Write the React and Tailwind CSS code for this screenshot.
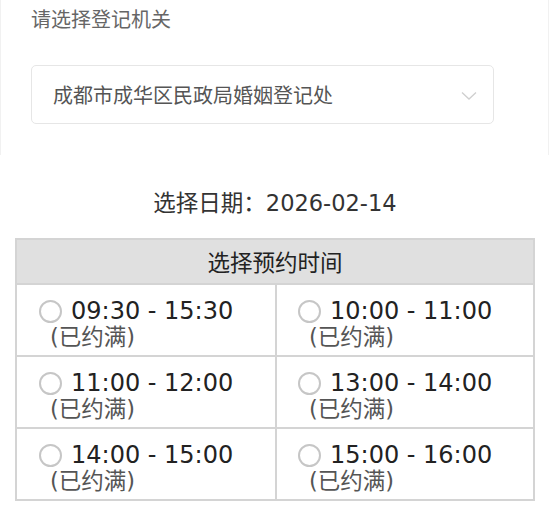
import React from 'react'

const slots = [
  ['09:30 - 15:30', '10:00 - 11:00'],
  ['11:00 - 12:00', '13:00 - 14:00'],
  ['14:00 - 15:00', '15:00 - 16:00'],
]

const SlotCell = ({ time, right }) => {
  return (
    <div className={`h-[70px] pt-[12px] ${right ? 'pl-[21px] border-l-2 border-[#d4d4d4]' : 'pl-[22px]'}`}>
      <div className="flex items-center gap-x-[9px] h-[28px]">
        <span className="w-[23px] h-[23px] rounded-full border-2 border-[#c6c6c6] bg-white shrink-0" />
        <span className="text-[24px] leading-[28px] text-[#222]">{time}</span>
      </div>
      <p className="pl-[11px] text-[22.5px] leading-[24px] text-[#555]">(已约满)</p>
    </div>
  )
}

export default function App() {
  return (
    <div
      className="w-[550px] h-[509px] bg-white overflow-hidden"
      style={{ fontFamily: '"DejaVu Sans", "Noto Sans CJK SC", sans-serif' }}
    >
      {/* Registry office picker */}
      <div
        className="w-[549px] h-[155px] border-x border-[#f1f1f1] pt-[5px]"
        style={{ fontFamily: '"Noto Sans CJK SC", sans-serif' }}
      >
        <p className="pl-[30px] text-[20px] leading-[28px] text-[#666]">请选择登记机关</p>

        <div className="mt-[32px] ml-[30px] w-[463px] h-[59px] rounded-[5px] border border-[#e6e6e6] flex items-center justify-between pl-[21px] pr-[16px]">
          <span className="text-[20px] text-[#555]">成都市成华区民政局婚姻登记处</span>
          <svg width="16" height="10" viewBox="0 0 16 10" fill="none" className="mt-[2px]">
            <path d="M1 1.5 L8 8 L15 1.5" stroke="#cfcfcf" strokeWidth="1.3" />
          </svg>
        </div>
      </div>

      {/* Date */}
      <p className="mt-[33px] text-center text-[22.5px] leading-[30px] text-[#333]">
        选择日期：2026-02-14
      </p>

      {/* Time slots */}
      <div className="mt-[20px] mx-[15px] w-[520px] border-2 border-[#d4d4d4]">
        <div
          className="h-[45px] bg-[#e0e0e0] border-b-2 border-[#d4d4d4] flex items-center justify-center text-[22.5px] text-[#222]"
          style={{ fontFamily: '"Noto Sans CJK SC", sans-serif' }}
        >
          选择预约时间
        </div>
        {slots.map((row, i) => (
          <div key={i} className={`grid grid-cols-2 ${i > 0 ? 'border-t-2 border-[#d4d4d4]' : ''}`}>
            <SlotCell time={row[0]} />
            <SlotCell time={row[1]} right />
          </div>
        ))}
      </div>
    </div>
  )
}
